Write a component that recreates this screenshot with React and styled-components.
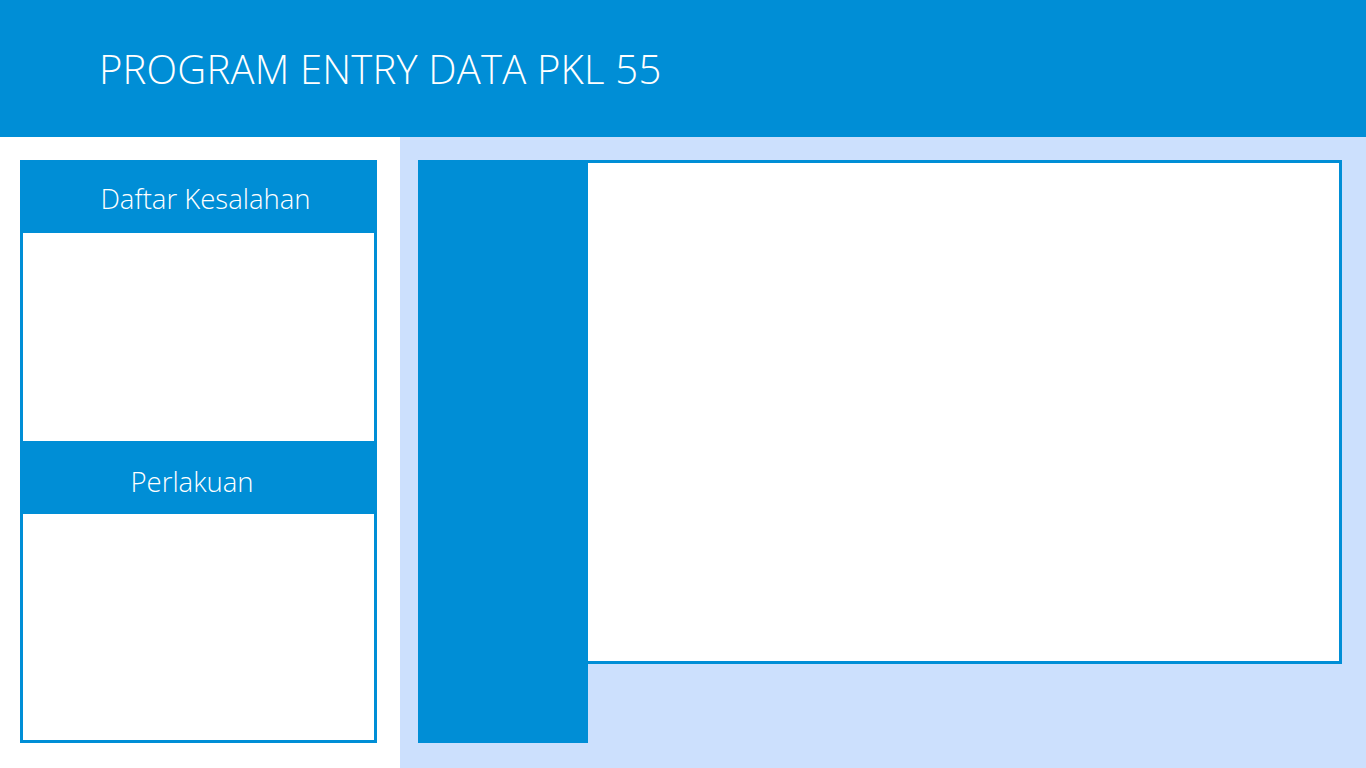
import React from 'react'
import styled, { createGlobalStyle } from 'styled-components'

const blue = '#008ed6'
const pale = '#cce0fd'

const GlobalStyle = createGlobalStyle`
	html, body {
		margin: 0;
		padding: 0;
		background: #fff;
		font-family: 'Open Sans', 'Liberation Sans', sans-serif;
	}
`

const Page = styled.div`
	width: 1366px;
	height: 768px;
	display: flex;
	flex-direction: column;
	overflow: hidden;
`

const Header = styled.header`
	height: 137px;
	flex-shrink: 0;
	background: ${blue};
	display: flex;
	align-items: center;
	padding-left: 99px;
	box-sizing: border-box;
`

const Title = styled.h1`
	margin: 0;
	color: #fff;
	font-weight: 300;
	font-size: 40px;
	letter-spacing: 0.2px;
	line-height: 1;
`

const Body = styled.div`
	flex: 1;
	display: flex;
`

const LeftColumn = styled.aside`
	width: 400px;
	padding: 23px 0 0 20px;
	box-sizing: border-box;
	background: #fff;
`

const Card = styled.div`
	width: 357px;
	height: 583px;
	border: 3px solid ${blue};
	border-top: 0;
	box-sizing: border-box;
	display: flex;
	flex-direction: column;
`

// $shift moves the centred label sideways (negative = to the left)
const CardHead = styled.div`
	height: 73px;
	margin: 0 -3px;
	background: ${blue};
	color: #fff;
	font-weight: 300;
	font-size: 27.5px;
	display: flex;
	align-items: center;
	justify-content: center;
	padding-top: ${({ $top }) => $top}px;
	padding-left: ${({ $shift }) => Math.max($shift, 0)}px;
	padding-right: ${({ $shift }) => Math.max(-$shift, 0)}px;
	box-sizing: border-box;
`

const CardBody = styled.div`
	height: ${({ $h }) => $h}px;
	background: #fff;
`

const Workspace = styled.main`
	flex: 1;
	background: ${pale};
	padding: 23px 0 0 18px;
	display: flex;
	align-items: flex-start;
`

const SideBar = styled.nav`
	width: 170px;
	height: 583px;
	background: ${blue};
	flex-shrink: 0;
`

const Canvas = styled.section`
	width: 754px;
	height: 504px;
	border: 3px solid ${blue};
	border-left: 0;
	background: #fff;
	box-sizing: border-box;
`

export default function App() {
	return (
		<>
			<GlobalStyle />
			<Page>
				<Header>
					<Title>PROGRAM ENTRY DATA PKL 55</Title>
				</Header>
				<Body>
					<LeftColumn>
						<Card>
							<CardHead $shift={14} $top={3}>Daftar Kesalahan</CardHead>
							<CardBody $h={208} />
							<CardHead $shift={-13} $top={7}>Perlakuan</CardHead>
							<CardBody $h={226} />
						</Card>
					</LeftColumn>
					<Workspace>
						<SideBar />
						<Canvas />
					</Workspace>
				</Body>
			</Page>
		</>
	)
}
